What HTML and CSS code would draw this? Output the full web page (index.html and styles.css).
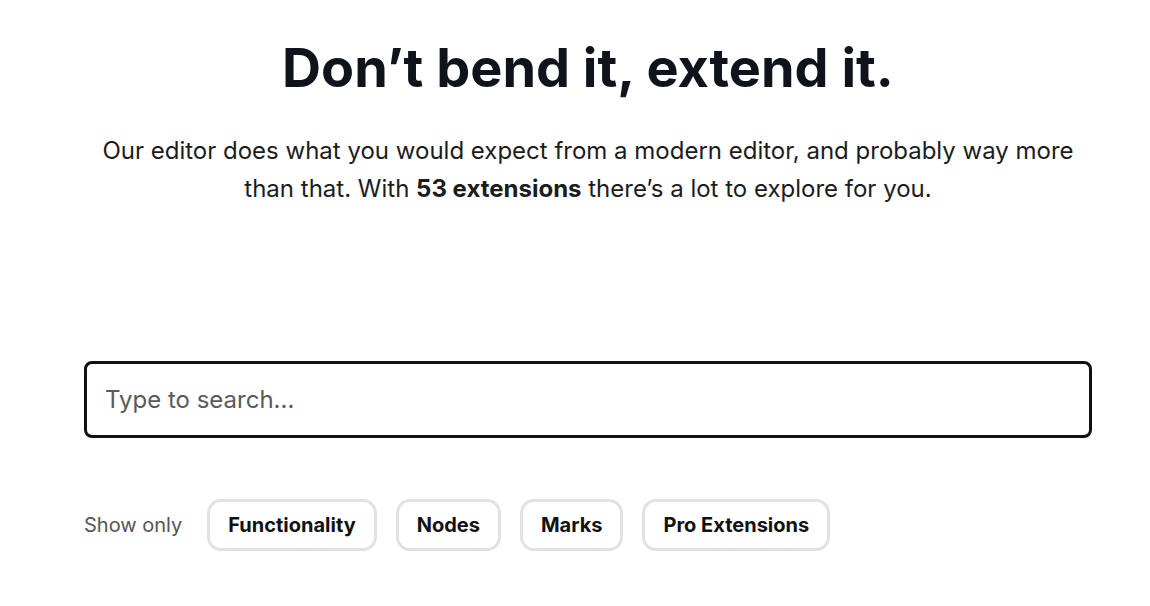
FILE: index.html
```html
<!DOCTYPE html>
<html lang="en">
<head>
<meta charset="utf-8">
<title>Extensions</title>
<link rel="stylesheet" href="styles.css">
</head>
<body>
<main class="page">
  <header class="hero">
    <h1 class="hero-title">Don’t bend it, extend it.</h1>
    <p class="hero-text">Our editor does what you would expect from a modern editor, and probably way more than that. With <strong>53 extensions</strong> there’s a lot to explore for you.</p>
  </header>
  <section class="search">
    <input class="search-input" type="text" placeholder="Type to search...">
  </section>
  <div class="filters">
    <span class="filters-label">Show only</span>
    <button class="pill">Functionality</button>
    <button class="pill">Nodes</button>
    <button class="pill">Marks</button>
    <button class="pill">Pro Extensions</button>
  </div>
</main>
</body>
</html>
```

FILE: styles.css
```css
* { box-sizing: border-box; }
html, body { margin: 0; padding: 0; background: #fff; }
body {
  font-family: Inter, "Noto Sans", sans-serif;
  color: #1a1a1a;
}
.page {
  padding: 35px 58px 0 84px;
}
.hero {
  text-align: center;
}
.hero-title {
  margin: 0;
  font-size: 54px;
  line-height: 65px;
  font-weight: 700;
  color: #0f131c;
}
.hero-text {
  margin: 32px auto 0;
  max-width: 990px;
  font-size: 24px;
  line-height: 38px;
  color: #1c1c1c;
}
.hero-text strong {
  font-weight: 700;
}
.search {
  margin-top: 153px;
}
.search-input {
  display: block;
  width: 100%;
  height: 77px;
  border: 3px solid #111;
  border-radius: 8px;
  padding: 0 18px;
  font-family: inherit;
  font-size: 24px;
  color: #111;
  outline: none;
}
.search-input::placeholder {
  color: #5a5a5a;
}
.filters {
  margin-top: 61px;
  display: flex;
  align-items: center;
  gap: 19px;
}
.filters-label {
  font-size: 20px;
  color: #555;
  margin-right: 6px;
}
.pill {
  height: 52px;
  padding: 0 18px;
  border: 3px solid #e2e2e2;
  border-radius: 14px;
  background: #fff;
  font-family: inherit;
  font-size: 20px;
  font-weight: 700;
  color: #111;
}
```
